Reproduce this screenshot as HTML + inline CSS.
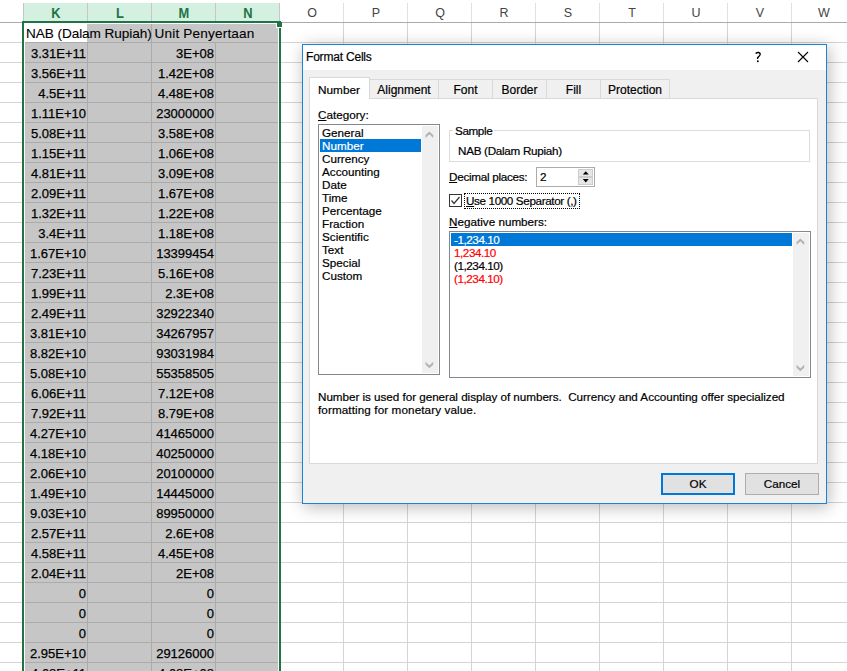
<!DOCTYPE html>
<html><head><meta charset="utf-8"><title>Format Cells</title>
<style>
*{margin:0;padding:0;box-sizing:border-box}
html,body{width:847px;height:671px;overflow:hidden;background:#fff}
body{position:relative;font-family:"Liberation Sans",sans-serif;color:#000}
.a{position:absolute}
.hl{position:absolute;height:1px}
.vl{position:absolute;width:1px}
.ch{position:absolute;top:3px;height:19px;width:64px;text-align:center;font-size:12.5px;line-height:21px;color:#444}
.chs{color:#217346;font-weight:bold;font-size:14px;line-height:20px;transform:scaleX(0.92);transform-origin:50% 50%}
.num{position:absolute;width:64px;height:20px;text-align:right;padding-right:1px;font-size:13px;line-height:24px;color:#000;white-space:nowrap;-webkit-text-stroke:0.25px #000}
.dlg{font-size:11.7px;-webkit-text-stroke:0.2px currentColor}
.t{position:absolute;white-space:nowrap;line-height:13px;-webkit-text-stroke:0.2px currentColor}
.tab{position:absolute;top:79px;height:20px;border:1px solid #d9d9d9;border-bottom:none;background:#f0f0f0;text-align:center;font-size:12px;line-height:21px;-webkit-text-stroke:0.2px #000}
.li{position:absolute;height:13px;line-height:13px;white-space:nowrap;font-size:11.7px;-webkit-text-stroke:0.2px currentColor}
</style></head><body>

<div class="hl" style="left:0;top:22px;width:22px;background:#d4d4d4"></div>
<div class="hl" style="left:0;top:42px;width:22px;background:#d4d4d4"></div>
<div class="hl" style="left:0;top:62px;width:22px;background:#d4d4d4"></div>
<div class="hl" style="left:0;top:82px;width:22px;background:#d4d4d4"></div>
<div class="hl" style="left:0;top:102px;width:22px;background:#d4d4d4"></div>
<div class="hl" style="left:0;top:122px;width:22px;background:#d4d4d4"></div>
<div class="hl" style="left:0;top:142px;width:22px;background:#d4d4d4"></div>
<div class="hl" style="left:0;top:162px;width:22px;background:#d4d4d4"></div>
<div class="hl" style="left:0;top:182px;width:22px;background:#d4d4d4"></div>
<div class="hl" style="left:0;top:202px;width:22px;background:#d4d4d4"></div>
<div class="hl" style="left:0;top:222px;width:22px;background:#d4d4d4"></div>
<div class="hl" style="left:0;top:242px;width:22px;background:#d4d4d4"></div>
<div class="hl" style="left:0;top:262px;width:22px;background:#d4d4d4"></div>
<div class="hl" style="left:0;top:282px;width:22px;background:#d4d4d4"></div>
<div class="hl" style="left:0;top:302px;width:22px;background:#d4d4d4"></div>
<div class="hl" style="left:0;top:322px;width:22px;background:#d4d4d4"></div>
<div class="hl" style="left:0;top:342px;width:22px;background:#d4d4d4"></div>
<div class="hl" style="left:0;top:362px;width:22px;background:#d4d4d4"></div>
<div class="hl" style="left:0;top:382px;width:22px;background:#d4d4d4"></div>
<div class="hl" style="left:0;top:402px;width:22px;background:#d4d4d4"></div>
<div class="hl" style="left:0;top:422px;width:22px;background:#d4d4d4"></div>
<div class="hl" style="left:0;top:442px;width:22px;background:#d4d4d4"></div>
<div class="hl" style="left:0;top:462px;width:22px;background:#d4d4d4"></div>
<div class="hl" style="left:0;top:482px;width:22px;background:#d4d4d4"></div>
<div class="hl" style="left:0;top:502px;width:22px;background:#d4d4d4"></div>
<div class="hl" style="left:0;top:522px;width:22px;background:#d4d4d4"></div>
<div class="hl" style="left:0;top:542px;width:22px;background:#d4d4d4"></div>
<div class="hl" style="left:0;top:562px;width:22px;background:#d4d4d4"></div>
<div class="hl" style="left:0;top:582px;width:22px;background:#d4d4d4"></div>
<div class="hl" style="left:0;top:602px;width:22px;background:#d4d4d4"></div>
<div class="hl" style="left:0;top:622px;width:22px;background:#d4d4d4"></div>
<div class="hl" style="left:0;top:642px;width:22px;background:#d4d4d4"></div>
<div class="hl" style="left:0;top:662px;width:22px;background:#d4d4d4"></div>
<div class="hl" style="left:280px;top:22px;width:567px;background:#ababab"></div>
<div class="hl" style="left:280px;top:42px;width:567px;background:#d4d4d4"></div>
<div class="hl" style="left:280px;top:62px;width:567px;background:#d4d4d4"></div>
<div class="hl" style="left:280px;top:82px;width:567px;background:#d4d4d4"></div>
<div class="hl" style="left:280px;top:102px;width:567px;background:#d4d4d4"></div>
<div class="hl" style="left:280px;top:122px;width:567px;background:#d4d4d4"></div>
<div class="hl" style="left:280px;top:142px;width:567px;background:#d4d4d4"></div>
<div class="hl" style="left:280px;top:162px;width:567px;background:#d4d4d4"></div>
<div class="hl" style="left:280px;top:182px;width:567px;background:#d4d4d4"></div>
<div class="hl" style="left:280px;top:202px;width:567px;background:#d4d4d4"></div>
<div class="hl" style="left:280px;top:222px;width:567px;background:#d4d4d4"></div>
<div class="hl" style="left:280px;top:242px;width:567px;background:#d4d4d4"></div>
<div class="hl" style="left:280px;top:262px;width:567px;background:#d4d4d4"></div>
<div class="hl" style="left:280px;top:282px;width:567px;background:#d4d4d4"></div>
<div class="hl" style="left:280px;top:302px;width:567px;background:#d4d4d4"></div>
<div class="hl" style="left:280px;top:322px;width:567px;background:#d4d4d4"></div>
<div class="hl" style="left:280px;top:342px;width:567px;background:#d4d4d4"></div>
<div class="hl" style="left:280px;top:362px;width:567px;background:#d4d4d4"></div>
<div class="hl" style="left:280px;top:382px;width:567px;background:#d4d4d4"></div>
<div class="hl" style="left:280px;top:402px;width:567px;background:#d4d4d4"></div>
<div class="hl" style="left:280px;top:422px;width:567px;background:#d4d4d4"></div>
<div class="hl" style="left:280px;top:442px;width:567px;background:#d4d4d4"></div>
<div class="hl" style="left:280px;top:462px;width:567px;background:#d4d4d4"></div>
<div class="hl" style="left:280px;top:482px;width:567px;background:#d4d4d4"></div>
<div class="hl" style="left:280px;top:502px;width:567px;background:#d4d4d4"></div>
<div class="hl" style="left:280px;top:522px;width:567px;background:#d4d4d4"></div>
<div class="hl" style="left:280px;top:542px;width:567px;background:#d4d4d4"></div>
<div class="hl" style="left:280px;top:562px;width:567px;background:#d4d4d4"></div>
<div class="hl" style="left:280px;top:582px;width:567px;background:#d4d4d4"></div>
<div class="hl" style="left:280px;top:602px;width:567px;background:#d4d4d4"></div>
<div class="hl" style="left:280px;top:622px;width:567px;background:#d4d4d4"></div>
<div class="hl" style="left:280px;top:642px;width:567px;background:#d4d4d4"></div>
<div class="hl" style="left:280px;top:662px;width:567px;background:#d4d4d4"></div>
<div class="vl" style="left:343px;top:3px;height:19px;background:#e1e1e1"></div>
<div class="vl" style="left:343px;top:23px;height:648px;background:#d4d4d4"></div>
<div class="vl" style="left:407px;top:3px;height:19px;background:#e1e1e1"></div>
<div class="vl" style="left:407px;top:23px;height:648px;background:#d4d4d4"></div>
<div class="vl" style="left:471px;top:3px;height:19px;background:#e1e1e1"></div>
<div class="vl" style="left:471px;top:23px;height:648px;background:#d4d4d4"></div>
<div class="vl" style="left:535px;top:3px;height:19px;background:#e1e1e1"></div>
<div class="vl" style="left:535px;top:23px;height:648px;background:#d4d4d4"></div>
<div class="vl" style="left:599px;top:3px;height:19px;background:#e1e1e1"></div>
<div class="vl" style="left:599px;top:23px;height:648px;background:#d4d4d4"></div>
<div class="vl" style="left:663px;top:3px;height:19px;background:#e1e1e1"></div>
<div class="vl" style="left:663px;top:23px;height:648px;background:#d4d4d4"></div>
<div class="vl" style="left:727px;top:3px;height:19px;background:#e1e1e1"></div>
<div class="vl" style="left:727px;top:23px;height:648px;background:#d4d4d4"></div>
<div class="vl" style="left:791px;top:3px;height:19px;background:#e1e1e1"></div>
<div class="vl" style="left:791px;top:23px;height:648px;background:#d4d4d4"></div>
<div class="hl" style="left:0;top:22px;width:22px;background:#ababab"></div>
<div class="a" style="left:23px;top:3px;width:257px;height:19px;background:#d3f0e0"></div>
<div class="vl" style="left:23px;top:3px;height:19px;background:#c6c6c6"></div>
<div class="vl" style="left:87px;top:3px;height:19px;background:#c6c6c6"></div>
<div class="vl" style="left:151px;top:3px;height:19px;background:#c6c6c6"></div>
<div class="vl" style="left:215px;top:3px;height:19px;background:#c6c6c6"></div>
<div class="vl" style="left:279px;top:3px;height:19px;background:#c6c6c6"></div>
<div class="ch chs" style="left:24px">K</div>
<div class="ch chs" style="left:88px">L</div>
<div class="ch chs" style="left:152px">M</div>
<div class="ch chs" style="left:216px">N</div>
<div class="ch" style="left:280px">O</div>
<div class="ch" style="left:344px">P</div>
<div class="ch" style="left:408px">Q</div>
<div class="ch" style="left:472px">R</div>
<div class="ch" style="left:536px">S</div>
<div class="ch" style="left:600px">T</div>
<div class="ch" style="left:664px">U</div>
<div class="ch" style="left:728px">V</div>
<div class="ch" style="left:792px">W</div>
<div class="a" style="left:24px;top:23px;width:255px;height:648px;background:#fff"></div>
<div class="a" style="left:25px;top:24px;width:253px;height:647px;background:#c6c6c6"></div>
<div class="hl" style="left:25px;top:42px;width:253px;background:#ababab"></div>
<div class="hl" style="left:25px;top:62px;width:253px;background:#ababab"></div>
<div class="hl" style="left:25px;top:82px;width:253px;background:#ababab"></div>
<div class="hl" style="left:25px;top:102px;width:253px;background:#ababab"></div>
<div class="hl" style="left:25px;top:122px;width:253px;background:#ababab"></div>
<div class="hl" style="left:25px;top:142px;width:253px;background:#ababab"></div>
<div class="hl" style="left:25px;top:162px;width:253px;background:#ababab"></div>
<div class="hl" style="left:25px;top:182px;width:253px;background:#ababab"></div>
<div class="hl" style="left:25px;top:202px;width:253px;background:#ababab"></div>
<div class="hl" style="left:25px;top:222px;width:253px;background:#ababab"></div>
<div class="hl" style="left:25px;top:242px;width:253px;background:#ababab"></div>
<div class="hl" style="left:25px;top:262px;width:253px;background:#ababab"></div>
<div class="hl" style="left:25px;top:282px;width:253px;background:#ababab"></div>
<div class="hl" style="left:25px;top:302px;width:253px;background:#ababab"></div>
<div class="hl" style="left:25px;top:322px;width:253px;background:#ababab"></div>
<div class="hl" style="left:25px;top:342px;width:253px;background:#ababab"></div>
<div class="hl" style="left:25px;top:362px;width:253px;background:#ababab"></div>
<div class="hl" style="left:25px;top:382px;width:253px;background:#ababab"></div>
<div class="hl" style="left:25px;top:402px;width:253px;background:#ababab"></div>
<div class="hl" style="left:25px;top:422px;width:253px;background:#ababab"></div>
<div class="hl" style="left:25px;top:442px;width:253px;background:#ababab"></div>
<div class="hl" style="left:25px;top:462px;width:253px;background:#ababab"></div>
<div class="hl" style="left:25px;top:482px;width:253px;background:#ababab"></div>
<div class="hl" style="left:25px;top:502px;width:253px;background:#ababab"></div>
<div class="hl" style="left:25px;top:522px;width:253px;background:#ababab"></div>
<div class="hl" style="left:25px;top:542px;width:253px;background:#ababab"></div>
<div class="hl" style="left:25px;top:562px;width:253px;background:#ababab"></div>
<div class="hl" style="left:25px;top:582px;width:253px;background:#ababab"></div>
<div class="hl" style="left:25px;top:602px;width:253px;background:#ababab"></div>
<div class="hl" style="left:25px;top:622px;width:253px;background:#ababab"></div>
<div class="hl" style="left:25px;top:642px;width:253px;background:#ababab"></div>
<div class="hl" style="left:25px;top:662px;width:253px;background:#ababab"></div>
<div class="vl" style="left:87px;top:42px;height:629px;background:#ababab"></div>
<div class="vl" style="left:151px;top:24px;height:647px;background:#ababab"></div>
<div class="vl" style="left:215px;top:42px;height:629px;background:#ababab"></div>
<div class="a" style="left:24px;top:23px;width:63px;height:19px;background:#fff"></div>
<div class="t" style="left:26px;top:27px;font-size:13.6px;line-height:14px;letter-spacing:-0.07px;-webkit-text-stroke:0.1px #000">NAB (Dalam Rupiah)</div>
<div class="t" style="left:154.6px;top:27px;font-size:13.6px;line-height:14px;letter-spacing:0.16px;-webkit-text-stroke:0.1px #000">Unit Penyertaan</div>
<div class="num" style="left:23px;top:42px">3.31E+11</div>
<div class="num" style="left:151px;top:42px">3E+08</div>
<div class="num" style="left:23px;top:62px">3.56E+11</div>
<div class="num" style="left:151px;top:62px">1.42E+08</div>
<div class="num" style="left:23px;top:82px">4.5E+11</div>
<div class="num" style="left:151px;top:82px">4.48E+08</div>
<div class="num" style="left:23px;top:102px">1.11E+10</div>
<div class="num" style="left:151px;top:102px">23000000</div>
<div class="num" style="left:23px;top:122px">5.08E+11</div>
<div class="num" style="left:151px;top:122px">3.58E+08</div>
<div class="num" style="left:23px;top:142px">1.15E+11</div>
<div class="num" style="left:151px;top:142px">1.06E+08</div>
<div class="num" style="left:23px;top:162px">4.81E+11</div>
<div class="num" style="left:151px;top:162px">3.09E+08</div>
<div class="num" style="left:23px;top:182px">2.09E+11</div>
<div class="num" style="left:151px;top:182px">1.67E+08</div>
<div class="num" style="left:23px;top:202px">1.32E+11</div>
<div class="num" style="left:151px;top:202px">1.22E+08</div>
<div class="num" style="left:23px;top:222px">3.4E+11</div>
<div class="num" style="left:151px;top:222px">1.18E+08</div>
<div class="num" style="left:23px;top:242px">1.67E+10</div>
<div class="num" style="left:151px;top:242px">13399454</div>
<div class="num" style="left:23px;top:262px">7.23E+11</div>
<div class="num" style="left:151px;top:262px">5.16E+08</div>
<div class="num" style="left:23px;top:282px">1.99E+11</div>
<div class="num" style="left:151px;top:282px">2.3E+08</div>
<div class="num" style="left:23px;top:302px">2.49E+11</div>
<div class="num" style="left:151px;top:302px">32922340</div>
<div class="num" style="left:23px;top:322px">3.81E+10</div>
<div class="num" style="left:151px;top:322px">34267957</div>
<div class="num" style="left:23px;top:342px">8.82E+10</div>
<div class="num" style="left:151px;top:342px">93031984</div>
<div class="num" style="left:23px;top:362px">5.08E+10</div>
<div class="num" style="left:151px;top:362px">55358505</div>
<div class="num" style="left:23px;top:382px">6.06E+11</div>
<div class="num" style="left:151px;top:382px">7.12E+08</div>
<div class="num" style="left:23px;top:402px">7.92E+11</div>
<div class="num" style="left:151px;top:402px">8.79E+08</div>
<div class="num" style="left:23px;top:422px">4.27E+10</div>
<div class="num" style="left:151px;top:422px">41465000</div>
<div class="num" style="left:23px;top:442px">4.18E+10</div>
<div class="num" style="left:151px;top:442px">40250000</div>
<div class="num" style="left:23px;top:462px">2.06E+10</div>
<div class="num" style="left:151px;top:462px">20100000</div>
<div class="num" style="left:23px;top:482px">1.49E+10</div>
<div class="num" style="left:151px;top:482px">14445000</div>
<div class="num" style="left:23px;top:502px">9.03E+10</div>
<div class="num" style="left:151px;top:502px">89950000</div>
<div class="num" style="left:23px;top:522px">2.57E+11</div>
<div class="num" style="left:151px;top:522px">2.6E+08</div>
<div class="num" style="left:23px;top:542px">4.58E+11</div>
<div class="num" style="left:151px;top:542px">4.45E+08</div>
<div class="num" style="left:23px;top:562px">2.04E+11</div>
<div class="num" style="left:151px;top:562px">2E+08</div>
<div class="num" style="left:23px;top:582px">0</div>
<div class="num" style="left:151px;top:582px">0</div>
<div class="num" style="left:23px;top:602px">0</div>
<div class="num" style="left:151px;top:602px">0</div>
<div class="num" style="left:23px;top:622px">0</div>
<div class="num" style="left:151px;top:622px">0</div>
<div class="num" style="left:23px;top:642px">2.95E+10</div>
<div class="num" style="left:151px;top:642px">29126000</div>
<div class="num" style="left:23px;top:662px">4.68E+11</div>
<div class="num" style="left:151px;top:662px">4.68E+08</div>
<div class="a" style="left:22px;top:21px;width:2px;height:650px;background:#217346"></div>
<div class="a" style="left:22px;top:21px;width:259px;height:2px;background:#217346"></div>
<div class="a" style="left:279px;top:28px;width:2px;height:643px;background:#217346"></div>
<div class="a" style="left:276px;top:23px;width:6px;height:5px;background:#fff"></div>
<div class="a" style="left:277px;top:22px;width:5px;height:5px;background:#217346"></div>
<div class="a dlg" style="left:302px;top:44px;width:525px;height:460px;background:#f0f0f0;border:1px solid #1883d7;box-shadow:2px 3px 16px rgba(0,0,0,0.28)">
</div>
<div class="a" style="left:303px;top:45px;width:523px;height:25px;background:#fff"></div>
<div class="t dlg" style="left:306px;top:51px;font-size:12px;letter-spacing:-0.2px">Format Cells</div>
<svg class="a" style="left:750px;top:48px" width="16" height="18"><path d="M5.6 5.6 Q7 4.3 8.6 4.5 Q10.4 4.9 10.1 6.7 Q9.8 7.9 8.4 8.9 Q7.4 9.7 7.5 11" stroke="#000" stroke-width="1.35" fill="none"/><circle cx="7.8" cy="13.3" r="0.95" fill="#000"/></svg>
<svg class="a" style="left:797px;top:51px" width="12" height="12" viewBox="0 0 12 12"><path d="M1 1 L11 11 M11 1 L1 11" stroke="#000" stroke-width="1.1" fill="none"/></svg>
<div class="a" style="left:309px;top:98px;width:509px;height:366px;background:#fff;border:1px solid #d9d9d9"></div>
<div class="tab" style="left:369px;width:70px;height:19px">Alignment</div>
<div class="tab" style="left:438px;width:55px;height:19px">Font</div>
<div class="tab" style="left:492px;width:55px;height:19px">Border</div>
<div class="tab" style="left:546px;width:55px;height:19px">Fill</div>
<div class="tab" style="left:600px;width:70px;height:19px">Protection</div>
<div class="a" style="left:309px;top:77px;width:61px;height:22px;background:#fff;border:1px solid #d9d9d9;border-bottom:none"></div>
<div class="t dlg" style="left:318px;top:84px;font-size:11.8px">Number</div>
<div class="t dlg" style="left:318px;top:108px"><u>C</u>ategory:</div>
<div class="a" style="left:318px;top:124px;width:122px;height:251px;background:#fff;border:1px solid #828790"></div>
<div class="a" style="left:422px;top:126px;width:16px;height:247px;background:#f0f0f0"></div>
<div class="li" style="left:322px;top:126px">General</div>
<div class="a" style="left:320px;top:139px;width:101px;height:13px;background:#0078d7"></div>
<div class="li" style="left:322px;top:139px;color:#fff">Number</div>
<div class="li" style="left:322px;top:152px">Currency</div>
<div class="li" style="left:322px;top:165px">Accounting</div>
<div class="li" style="left:322px;top:178px">Date</div>
<div class="li" style="left:322px;top:191px">Time</div>
<div class="li" style="left:322px;top:204px">Percentage</div>
<div class="li" style="left:322px;top:217px">Fraction</div>
<div class="li" style="left:322px;top:230px">Scientific</div>
<div class="li" style="left:322px;top:243px">Text</div>
<div class="li" style="left:322px;top:256px">Special</div>
<div class="li" style="left:322px;top:269px">Custom</div>
<svg class="a" style="left:422px;top:126px" width="16" height="16"><path d="M3.6 11.9 L7.4 8.3 L11.2 11.9 L11.2 8.9 L7.4 5.5 L3.6 8.9 Z" fill="#b3b3b3"/></svg>
<svg class="a" style="left:422px;top:357px" width="16" height="16"><path d="M3.6 4.8 L7.4 8.4 L11.2 4.8 L11.2 7.8 L7.4 11.2 L3.6 7.8 Z" fill="#b3b3b3"/></svg>
<div class="a" style="left:449px;top:130px;width:361px;height:32px;border:1px solid #dcdcdc"></div>
<div class="a t dlg" style="left:453px;top:124px;background:#fff;padding:0 2px;letter-spacing:-0.4px">Sample</div>
<div class="t dlg" style="left:458px;top:144px;letter-spacing:-0.3px">NAB (Dalam Rupiah)</div>
<div class="t dlg" style="left:449px;top:170px;letter-spacing:-0.28px"><u>D</u>ecimal places:</div>
<div class="a" style="left:536px;top:167px;width:59px;height:20px;background:#fff;border:1px solid #ababab"></div>
<div class="t dlg" style="left:540px;top:170px">2</div>
<div class="a" style="left:578px;top:169px;width:15px;height:8px;background:#e6e6e6;border:1px solid #cdcdcd"></div>
<div class="a" style="left:578px;top:177px;width:15px;height:8px;background:#e6e6e6;border:1px solid #cdcdcd"></div>
<svg class="a" style="left:578px;top:169px" width="15" height="16"><path d="M4.8 5.6 L7.75 2.2 L10.7 5.6 Z M4.8 10 L10.7 10 L7.75 13.6 Z" fill="#000"/></svg>
<div class="a" style="left:449px;top:194px;width:13px;height:13px;background:#fff;border:1px solid #333"></div>
<svg class="a" style="left:449px;top:194px" width="13" height="13"><path d="M2.5 6.5 L5 9.5 L10.5 3" stroke="#333" stroke-width="1.2" fill="none"/></svg>
<div class="a" style="left:464px;top:193px;width:116px;height:16px;border:1px dotted #000"></div>
<div class="t dlg" style="left:466px;top:194px;letter-spacing:-0.38px"><u>U</u>se 1000 Separator (,)</div>
<div class="t dlg" style="left:449px;top:214.7px"><u>N</u>egative numbers:</div>
<div class="a" style="left:449px;top:231px;width:362px;height:147px;background:#fff;border:1px solid #828790"></div>
<div class="a" style="left:793px;top:233px;width:16px;height:143px;background:#f0f0f0"></div>
<div class="a" style="left:451px;top:233px;width:341px;height:13px;background:#0078d7"></div>
<div class="li" style="left:454px;top:233px;color:#fff;letter-spacing:-0.45px">-1,234.10</div>
<div class="li" style="left:454px;top:246px;color:#ff0000;letter-spacing:-0.45px">1,234.10</div>
<div class="li" style="left:454px;top:259px;color:#000;letter-spacing:-0.45px">(1,234.10)</div>
<div class="li" style="left:454px;top:272px;color:#ff0000;letter-spacing:-0.45px">(1,234.10)</div>
<svg class="a" style="left:793px;top:233px" width="16" height="16"><path d="M3.6 11.9 L7.4 8.3 L11.2 11.9 L11.2 8.9 L7.4 5.5 L3.6 8.9 Z" fill="#b3b3b3"/></svg>
<svg class="a" style="left:793px;top:360px" width="16" height="16"><path d="M3.6 4.8 L7.4 8.4 L11.2 4.8 L11.2 7.8 L7.4 11.2 L3.6 7.8 Z" fill="#b3b3b3"/></svg>
<div class="t dlg" style="left:318px;top:390px;letter-spacing:-0.04px">Number is used for general display of numbers.&nbsp; Currency and Accounting offer specialized</div>
<div class="t dlg" style="left:318px;top:403px;letter-spacing:0.1px">formatting for monetary value.</div>
<div class="a dlg" style="left:661px;top:473px;width:74px;height:22px;background:#e1e1e1;border:2px solid #0078d7;text-align:center;line-height:18px">OK</div>
<div class="a dlg" style="left:745px;top:473px;width:74px;height:22px;background:#e1e1e1;border:1px solid #adadad;text-align:center;line-height:20px">Cancel</div>
</body></html>
